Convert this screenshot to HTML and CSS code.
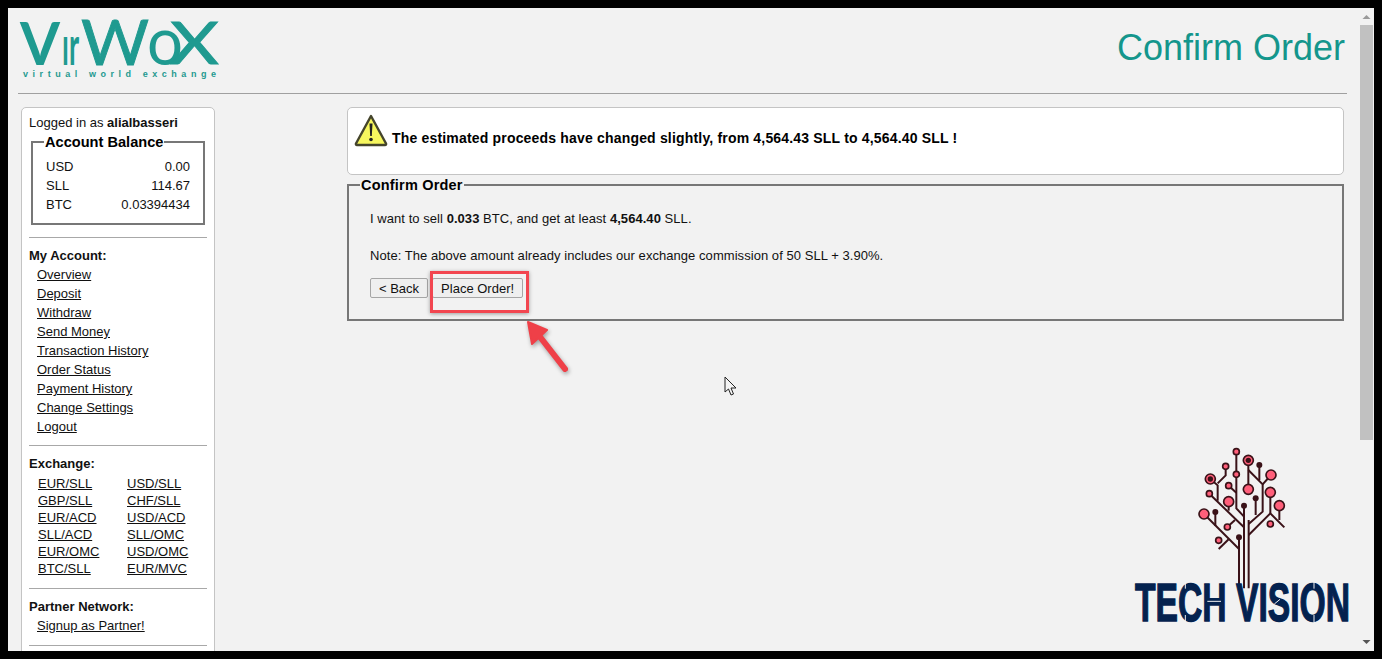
FILE: index.html
```html
<!DOCTYPE html>
<html lang="en">
<head>
<meta charset="utf-8">
<title>Confirm Order</title>
<link rel="stylesheet" href="styles.css">
</head>
<body>
<div class="frame">
  <div class="page">
    <header class="header">
      <svg class="logo" width="204" height="62" viewBox="0 0 204 62" role="img" aria-label="VirWoX virtual world exchange">
        <g class="logo-mark">
          <text class="heavy" x="1" y="45" font-size="60" textLength="40" lengthAdjust="spacingAndGlyphs">V</text>
          <text class="heavy" x="43" y="45" font-size="54" textLength="17" lengthAdjust="spacingAndGlyphs">ır</text>
          <text class="medium" x="62" y="45" font-size="62" textLength="68" lengthAdjust="spacingAndGlyphs">W</text>
          <text x="128" y="45" font-size="68" textLength="36" lengthAdjust="spacingAndGlyphs">o</text>
          <text class="medium" x="151" y="44" font-size="58" textLength="49" lengthAdjust="spacingAndGlyphs">X</text>
        </g>
        <text class="logo-sub" x="4" y="57" textLength="193">virtual world exchange</text>
      </svg>
      <h1 class="title">Confirm Order</h1>
    </header>
    <div class="columns">
      <aside class="sidebar">
        <div class="logged">Logged in as <b>alialbasseri</b></div>
        <fieldset class="balance">
          <legend>Account Balance</legend>
          <div class="balance-row"><span>USD</span><span>0.00</span></div>
          <div class="balance-row"><span>SLL</span><span>114.67</span></div>
          <div class="balance-row"><span>BTC</span><span>0.03394434</span></div>
        </fieldset>
        <hr class="rule">
        <h2 class="nav-title">My Account:</h2>
        <nav class="nav">
          <a href="#">Overview</a>
          <a href="#">Deposit</a>
          <a href="#">Withdraw</a>
          <a href="#">Send Money</a>
          <a href="#">Transaction History</a>
          <a href="#">Order Status</a>
          <a href="#">Payment History</a>
          <a href="#">Change Settings</a>
          <a href="#">Logout</a>
        </nav>
        <hr class="rule rule-exchange">
        <h2 class="nav-title">Exchange:</h2>
        <div class="pairs">
          <a href="#">EUR/SLL</a><a href="#">USD/SLL</a>
          <a href="#">GBP/SLL</a><a href="#">CHF/SLL</a>
          <a href="#">EUR/ACD</a><a href="#">USD/ACD</a>
          <a href="#">SLL/ACD</a><a href="#">SLL/OMC</a>
          <a href="#">EUR/OMC</a><a href="#">USD/OMC</a>
          <a href="#">BTC/SLL</a><a href="#">EUR/MVC</a>
        </div>
        <hr class="rule rule-partner">
        <h2 class="nav-title">Partner Network:</h2>
        <nav class="nav"><a href="#">Signup as Partner!</a></nav>
        <hr class="rule rule-last">
      </aside>
      <main class="main">
        <div class="notice">
          <svg class="warn" width="34" height="34" viewBox="0 0 34 34" aria-hidden="true">
            <path d="M17 2 L32 29.500 Q32.500 31 31 31 L3 31 Q1.500 31 2 29.500 Z" fill="#f7f75e" stroke="#45452c" stroke-width="2.400" stroke-linejoin="round"/>
            <path d="M15.500 9.500 H18.500 L17.800 22 H16.200 Z" fill="#222"/>
            <circle cx="17" cy="25.500" r="1.800" fill="#222"/>
          </svg>
          <p class="notice-text">The estimated proceeds have changed slightly, from 4,564.43 SLL to 4,564.40 SLL !</p>
        </div>
        <fieldset class="confirm">
          <legend>Confirm Order</legend>
          <p class="line">I want to sell <b>0.033</b> BTC, and get at least <b>4,564.40</b> SLL.</p>
          <p class="line note">Note: The above amount already includes our exchange commission of 50 SLL + 3.90%.</p>
          <div class="actions">
            <button class="btn" type="button">&lt; Back</button>
            <button class="btn" type="button">Place Order!</button>
          </div>
        </fieldset>
      </main>
    </div>
  </div>
  <div class="scrollbar">
    <svg class="arrow-btn" width="15" height="17" viewBox="0 0 15 17" aria-hidden="true"><path d="M3.500 11 L7.500 7 L11.500 11 Z" fill="#9a9a9a"/></svg>
    <div class="thumb"></div>
    <svg class="arrow-btn arrow-down" width="15" height="17" viewBox="0 0 15 17" aria-hidden="true"><path d="M3.500 6 L7.500 10 L11.500 6 Z" fill="#555"/></svg>
  </div>

  <div class="highlight"></div>
  <svg class="pointer" width="60" height="70" viewBox="0 0 60 70" aria-hidden="true">
    <path d="M44 53 L16 17" stroke="#ef4048" stroke-width="6" stroke-linecap="round" fill="none"/>
    <path d="M7 6 L26 14 L11 28 Z" fill="#ef4048" stroke="#ef4048" stroke-width="2" stroke-linejoin="round"/>
  </svg>
  <svg class="cursor" width="14" height="21" viewBox="0 0 14 21" aria-hidden="true">
    <path d="M1 1 V16 L4.500 13 L7 19 L9.500 18 L7 12 H12 Z" fill="#f4f4f4" stroke="#222" stroke-width="1"/>
  </svg>
  <svg class="brand" width="262" height="219" viewBox="0 0 786 657" role="img" aria-label="Tech Vision">
    <g class="branches">
      <path d="M357 292 V445 M372 197 V445 M386 240 V445"/>
      <path d="M349 35 V205 L372 230"/>
      <path d="M268 161 L372 262"/>
      <path d="M271 117 L293 136 V182"/>
      <path d="M317 79 V106 L293 130"/>
      <path d="M326 137 L349 158"/>
      <path d="M326 185 V212"/>
      <path d="M252 222 L357 327"/>
      <path d="M286 216 V258"/>
      <path d="M322 261 L345 240"/>
      <path d="M296 327 L326 298"/>
      <path d="M385 60 V148"/>
      <path d="M385 90 L428 133 V215 L386 252"/>
      <path d="M418 75 V120"/>
      <path d="M453 105 L428 133"/>
      <path d="M451 157 V220"/>
      <path d="M386 285 L451 220 L493 262"/>
      <path d="M478 197 V240"/>
      <path d="M407 175 V225"/>
    </g>
    <g class="nodes-dark">
      <circle cx="372" cy="197" r="9"/><circle cx="357" cy="292" r="9"/><circle cx="286" cy="216" r="9"/>
      <circle cx="407" cy="175" r="9"/><circle cx="418" cy="75" r="9"/>
    </g>
    <g class="nodes-ring">
      <circle cx="385" cy="61" r="15"/><circle cx="271" cy="117" r="15"/>
    </g>
    <circle class="ring-core" cx="385" cy="61" r="8"/><circle class="ring-core" cx="271" cy="117" r="8"/>
    <g class="nodes-big">
      <circle cx="453" cy="105" r="15"/><circle cx="385" cy="148" r="15"/><circle cx="451" cy="157" r="15"/>
      <circle cx="478" cy="197" r="15"/><circle cx="326" cy="185" r="15"/><circle cx="252" cy="222" r="15"/>
    </g>
    <g class="nodes-small">
      <circle cx="349" cy="35" r="9"/><circle cx="317" cy="79" r="9"/><circle cx="349" cy="103" r="9"/>
      <circle cx="326" cy="137" r="9"/><circle cx="268" cy="161" r="9"/><circle cx="322" cy="261" r="9"/>
      <circle cx="296" cy="301" r="9"/><circle cx="451" cy="252" r="9"/>
    </g>
    <text class="brand-text" x="45" y="543" textLength="645" lengthAdjust="spacingAndGlyphs">TECH VISION</text>
    <path class="stencil" d="M196 425 V446 M196 525 V546 M582 425 V446 M582 525 V546 M463 492 L480 478 M262 484 H303"/>
  </svg>
</div>
</body>
</html>
```
FILE: styles.css
```css
* { box-sizing: border-box; }
html, body { margin: 0; padding: 0; height: 100%; overflow: hidden; }
body { font-family: "Liberation Sans", Arial, sans-serif; font-size: 13px; color: #111; background: #000; }

.frame {
  position: relative;
  display: flex;
  width: 1382px;
  height: 659px;
  border: 8px solid #000;
  background: #f2f2f2;
  overflow: hidden;
}
.page { flex: 1; min-width: 0; padding: 0 12px 0 10px; overflow: hidden; }

.header {
  display: flex;
  justify-content: space-between;
  height: 86px;
  padding: 11px 0 0 1px;
  border-bottom: 1px solid #a0a0a0;
  margin-bottom: 13px;
}
.logo { display: block; margin-top: 1px; overflow: visible; }
.logo-mark text { font-family: Lato, "Liberation Sans", sans-serif; font-weight: 400; fill: #1f9a90; }
.logo-mark .heavy { font-weight: 700; }
.logo-mark .medium { stroke: #1f9a90; stroke-width: 0.9px; }
.logo-sub { font-family: "Liberation Sans", sans-serif; font-weight: 700; font-size: 9px; fill: #1f9a90; }
.title { margin: 8px 2px 0 0; font-size: 36px; line-height: 42px; font-weight: 400; color: #14968c; }

.columns { display: flex; align-items: flex-start; padding-left: 3px; }
.sidebar {
  flex: none;
  width: 194px;
  height: 620px;
  padding: 7px 7px 0;
  background: #fff;
  border: 1px solid #c4c4c4;
  border-radius: 5px;
}
.logged { line-height: 15px; }
.balance {
  margin: 4px 2px 0 2px;
  padding: 7px 13px 8px;
  height: 91px;
  border: 2px solid #777;
  min-width: 0;
}
.balance legend { padding: 0 1px; margin-left: -2px; font-size: 14.6px; line-height: 16px; font-weight: 700; color: #000; }
.balance-row { display: flex; justify-content: space-between; line-height: 19px; }

.rule { height: 1px; margin: 12px 0 0; border: 0; background: #a8a8a8; }
.rule-exchange { margin: 9px 0 1px; }
.rule-partner { margin: 11px 0 1px; }
.rule-last { margin-top: 10px; }
.nav-title { margin: 10px 0 2px; font-size: 13px; line-height: 15px; font-weight: 700; }
.nav { display: flex; flex-direction: column; align-items: flex-start; padding-left: 8px; }
.nav a { line-height: 19px; color: #111; }
.pairs { display: grid; grid-template-columns: 89px 1fr; padding-left: 9px; margin-top: 4px; }
.pairs a { justify-self: start; line-height: 17px; color: #111; }

.main { flex: 1; min-width: 0; margin: 0 3px 0 132px; }
.notice {
  display: flex;
  align-items: flex-start;
  height: 68px;
  padding: 6px 6px 0 6px;
  background: #fff;
  border: 1px solid #c4c4c4;
  border-radius: 5px;
}
.warn { flex: none; }
.notice-text { margin: 16px 0 0 4px; font-size: 14px; line-height: 16px; font-weight: 700; letter-spacing: 0.18px; color: #000; }

.confirm {
  height: 144px;
  margin: 2px 0 0;
  padding: 18px 21px 0;
  border: 2px solid #777;
  min-width: 0;
}
.confirm legend { padding: 0 1px; margin-left: -10px; font-size: 14.5px; line-height: 16px; font-weight: 700; letter-spacing: 0.2px; color: #000; }
.line { margin: 0; line-height: 15px; letter-spacing: 0.05px; }
.note { margin-top: 22px; }
.actions { display: flex; gap: 4px; margin-top: 15px; }
.btn {
  height: 20px;
  padding: 1px 8px 0;
  font: 13px/18px "Liberation Sans", Arial, sans-serif;
  color: #111;
  background: #efefef;
  border: 1px solid #a6a6a6;
  border-radius: 2px;
}

.scrollbar { flex: none; width: 15px; display: flex; flex-direction: column; align-items: center; }
.arrow-btn { display: block; flex: none; }
.thumb { flex: none; width: 13px; height: 415px; background: #c1c1c1; }
.arrow-down { margin-top: auto; }

.highlight {
  position: absolute;
  left: 422px;
  top: 263px;
  width: 99px;
  height: 42px;
  border: 3px solid #f24650;
  box-shadow: 0 1px 4px rgba(0,0,0,.35);
}
.pointer { position: absolute; left: 513px; top: 308px; filter: drop-shadow(1px 2px 2px rgba(0,0,0,.35)); }
.cursor { position: absolute; left: 716px; top: 368px; }

.brand { position: absolute; left: 1112px; top: 432px; pointer-events: none; }
.branches path { fill: none; stroke: #3a1218; stroke-width: 6; }
.nodes-dark circle { fill: #3a1218; }
.nodes-ring circle { fill: #ff5f7a; stroke: #3a1218; stroke-width: 5; }
.ring-core { fill: #3a1218; }
.nodes-big circle { fill: #ff5f7a; stroke: #3a1218; stroke-width: 5; }
.nodes-small circle { fill: #ff5f7a; stroke: #3a1218; stroke-width: 5; }
.brand-text { font-family: "Liberation Sans", sans-serif; font-weight: 700; font-size: 160px; fill: #04224f; stroke: #04224f; stroke-width: 4; }
.stencil { fill: none; stroke: #f2f2f2; stroke-width: 3; }
```
